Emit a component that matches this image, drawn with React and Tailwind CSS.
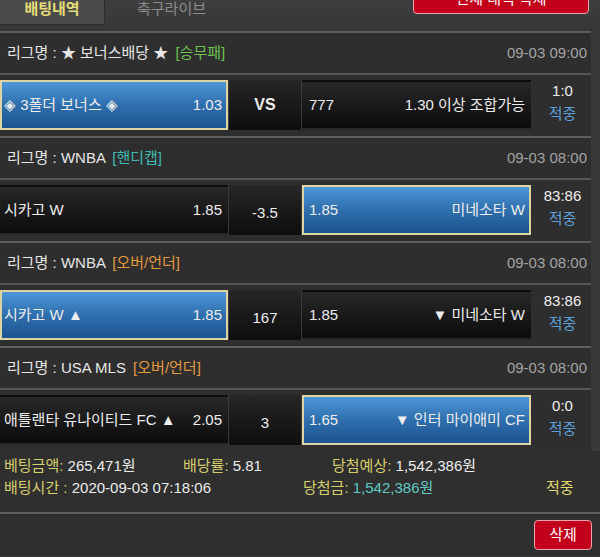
import React from 'react';

const bets = [
  {
    league: '★ 보너스배당 ★',
    type: '승무패',
    typeColor: 'text-[#6fc24f]',
    time: '09-03 09:00',
    home: '◈ 3폴더 보너스 ◈',
    homeOdd: '1.03',
    mid: 'VS',
    awayOdd: '777',
    away: '1.30 이상 조합가능',
    pick: 'home',
    score: '1:0',
  },
  {
    league: 'WNBA',
    type: '핸디캡',
    typeColor: 'text-[#3fbab2]',
    time: '09-03 08:00',
    home: '시카고 W',
    homeOdd: '1.85',
    mid: '-3.5',
    awayOdd: '1.85',
    away: '미네소타 W',
    pick: 'away',
    score: '83:86',
  },
  {
    league: 'WNBA',
    type: '오버/언더',
    typeColor: 'text-[#e39a3e]',
    time: '09-03 08:00',
    home: '시카고 W ▲',
    homeOdd: '1.85',
    mid: '167',
    awayOdd: '1.85',
    away: '▼ 미네소타 W',
    pick: 'home',
    score: '83:86',
  },
  {
    league: 'USA MLS',
    type: '오버/언더',
    typeColor: 'text-[#e39a3e]',
    time: '09-03 08:00',
    home: '애틀랜타 유나이티드 FC ▲',
    homeOdd: '2.05',
    mid: '3',
    awayOdd: '1.65',
    away: '▼ 인터 마이애미 CF',
    pick: 'away',
    score: '0:0',
  },
];

const blueCell = 'bg-linear-to-b from-[#4d97d8] via-[#2f6fae] to-[#1c5391] border-2 border-[#dcd4a2]';
const darkCell = 'bg-linear-to-b from-[#282828] to-[#0c0c0c] border-2 border-transparent';

const BetBlock = ({ bet }) => (
  <div>
    <div className="h-[2px] bg-[#5e5e5e]" />
    {/* league header */}
    <div className="h-[40px] flex items-center justify-between pl-[7px] pr-[4px] text-[15px]">
      <div className="text-[#e6e6e6]">
        리그명 : {bet.league} <span className={'ml-[3px] ' + bet.typeColor}>[{bet.type}]</span>
      </div>
      <div className="text-[#a3a3a3]">{bet.time}</div>
    </div>
    <div className="h-[2px] bg-[#555555]" />
    {/* match row */}
    <div className="h-[61px] pt-[5px] flex text-[15px] text-[#ededed]">
      <div className={'w-[228px] h-[50px] flex items-center justify-between pl-[2px] pr-[4px] ' + (bet.pick === 'home' ? blueCell : darkCell)}>
        <span>{bet.home}</span>
        <span>{bet.homeOdd}</span>
      </div>
      <div className={'w-[74px] h-[50px] flex items-center justify-center border-x border-[#3a3a3a] bg-linear-to-b from-[#262626] to-[#0e0e0e] ' + (bet.mid === 'VS' ? 'font-bold text-[16px]' : 'pt-[6px]')}>
        {bet.mid}
      </div>
      <div className={'w-[229px] h-[50px] flex items-center justify-between pl-[5px] pr-[4px] ' + (bet.pick === 'away' ? blueCell : darkCell)}>
        <span>{bet.awayOdd}</span>
        <span>{bet.away}</span>
      </div>
      <div className="flex-1 h-[50px] pb-[7px] pl-[3px] flex flex-col items-center justify-center leading-[23px]">
        <span className="text-[#f0f0f0]">{bet.score}</span>
        <span className="text-[#5c9fd8]">적중</span>
      </div>
    </div>
  </div>
);

export default function App() {
  return (
    <div className="w-[600px] h-[557px] overflow-hidden bg-[#393939] font-['Liberation_Sans','Noto_Sans_CJK_KR',sans-serif]">
      {/* top tabs */}
      <div className="h-[31px] flex items-start bg-linear-to-b from-[#3e3e3e] to-[#363636]">
        <div className="w-[105px] h-[25px] bg-[#4b4b4b] border-b border-r border-[#2e2e2e] flex justify-center text-[15px] leading-[18px] font-bold text-[#e6df78]">
          배팅내역
        </div>
        <div className="w-[100px] ml-[32px] text-[15px] leading-[18px] text-[#8c8c8c]">축구라이브</div>
        <div className="ml-auto mr-[11px] -mt-[16px] w-[176px] h-[30px] rounded-[4px] border border-[#eca6ae] bg-[#c2001b] flex items-center justify-center text-[15px] text-white">
          전체 내역 삭제
        </div>
      </div>

      <div className="w-[591px] bg-[#2e2e2e]">
        {bets.map((bet, i) => (
          <BetBlock key={i} bet={bet} />
        ))}
      </div>

      {/* summary */}
      <div className="bg-[#2f2f2f] pt-[4px] pb-[13px] pl-[4px] text-[15px] leading-[22px]">
        <div className="flex">
          <div className="w-[179px]">
            <span className="text-[#d6ce6c]">베팅금액:</span> <span className="text-[#ececec]">265,471원</span>
          </div>
          <div className="w-[149px]">
            <span className="text-[#d6ce6c]">배당률:</span> <span className="text-[#ececec]">5.81</span>
          </div>
          <div>
            <span className="text-[#d6ce6c]">당첨예상:</span> <span className="text-[#ececec]">1,542,386원</span>
          </div>
        </div>
        <div className="flex">
          <div className="w-[299px]">
            <span className="text-[#d6ce6c]">배팅시간 :</span> <span className="text-[#ececec]">2020-09-03 07:18:06</span>
          </div>
          <div className="w-[243px]">
            <span className="text-[#d6ce6c]">당첨금:</span> <span className="text-[#5fcac2]">1,542,386원</span>
          </div>
          <div className="text-[#e2da6a]">적중</div>
        </div>
      </div>
      <div className="h-[2px] bg-[#5f5f5f]" />
      <div className="h-[42px] bg-[#2f2f2f] flex justify-end pt-[6px] pr-[8px]">
        <div className="w-[58px] h-[30px] rounded-[4px] border border-[#eca6ae] bg-[#c2001b] flex items-center justify-center text-[15px] text-white">
          삭제
        </div>
      </div>
    </div>
  );
}
